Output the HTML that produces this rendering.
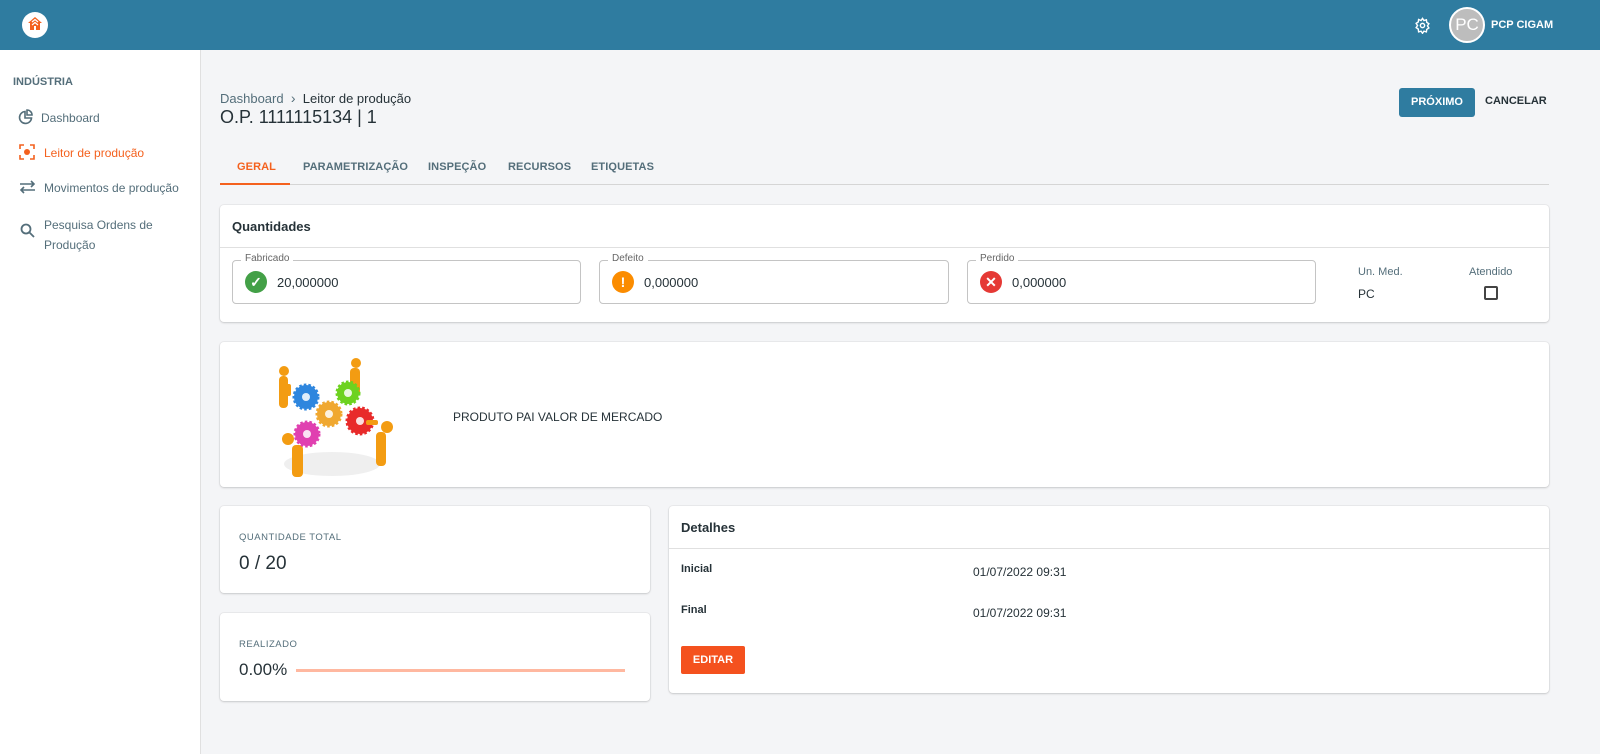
<!DOCTYPE html>
<html><head><meta charset="utf-8"><style>
*{box-sizing:border-box;margin:0;padding:0}
body{width:1600px;height:754px;background:#f4f5f7;font-family:"Liberation Sans",Roboto,sans-serif;color:#263238;position:relative;overflow:hidden}
.hdr{position:absolute;left:0;top:0;width:1600px;height:50px;background:#2f7ca0}
.side{position:absolute;left:0;top:50px;width:201px;height:704px;background:#fff;border-right:1px solid #e0e0e0}
.abs{position:absolute}
.card{position:absolute;background:#fff;border-radius:4px;box-shadow:0 1px 2px rgba(0,0,0,.15),0 0 0 1px rgba(0,0,0,.04)}
.nav{position:absolute;font-size:12px;color:#546e7a}
.fld{position:absolute;top:260px;height:44px;border:1px solid #c4c4c4;border-radius:4px}
.fld .lb{position:absolute;top:-8px;left:8px;background:#fff;padding:0 4px;font-size:10px;color:#666}
.fld .v{position:absolute;left:44px;top:14px;font-size:13px;color:#263238}
.ic{position:absolute;left:12px;top:10px;width:22px;height:22px;border-radius:50%;color:#fff;text-align:center;font-weight:bold;line-height:22px;font-size:14px}
.tab{position:absolute;top:161px;font-size:11px;font-weight:bold;color:#546e7a;letter-spacing:.1px}
</style></head><body>
<div class="hdr">
 <div class="abs" style="left:22px;top:12px;width:26px;height:26px;border-radius:50%;background:#fff"></div>
 <svg class="abs" style="left:27px;top:16px" width="16" height="16" viewBox="0 0 16 16"><path d="M8 1L1 7h2v7h4v-4h2v4h4V7h2z" fill="#f4611e"/><path d="M5 6l3-2.5L11 6M5 9l3-2.5L11 9" stroke="#fff" stroke-width="1.2" fill="none"/></svg>
 <svg class="abs" style="left:1414px;top:17px" width="17" height="17" viewBox="0 0 24 24" fill="none" stroke="#fff" stroke-width="2"><circle cx="12" cy="12" r="3"/><path d="M12 2l2 3 3.5-1 .5 3.5 3 2-2 3 2 3-3 2-.5 3.5-3.5-1-2 3-2-3-3.5 1L6 17l-3-2 2-3-2-3 3-2 .5-3.5L10 5z"/></svg>
 <div class="abs" style="left:1449px;top:7px;width:36px;height:36px;border-radius:50%;background:#bdbdbd;border:2px solid #fff;color:#fff;font-size:17px;text-align:center;line-height:32px">PC</div>
 <div class="abs" style="left:1491px;top:19px;line-height:13px;color:#fff;font-size:11px;font-weight:bold">PCP CIGAM</div>
</div>
<div class="side">
 <div class="abs" style="left:13px;top:26px;font-size:11px;color:#546e7a;font-weight:bold">INDÚSTRIA</div>
 <svg class="abs" style="left:18px;top:59px" width="16" height="16" viewBox="0 0 16 16" fill="none" stroke="#546e7a" stroke-width="1.6"><path d="M7 2.5A6 6 0 1 0 13.5 9H7z"/><path d="M9 1v5h5A5 5 0 0 0 9 1z"/></svg>
 <div class="nav" style="left:41px;top:61px">Dashboard</div>
 <svg class="abs" style="left:19px;top:94px" width="16" height="16" viewBox="0 0 16 16" fill="none" stroke="#f4611e" stroke-width="1.6"><path d="M1 5V1h4M11 1h4v4M15 11v4h-4M5 15H1v-4"/><circle cx="8" cy="8" r="3" fill="#f4611e" stroke="none"/></svg>
 <div class="nav" style="left:44px;top:96px;color:#f4611e">Leitor de produção</div>
 <svg class="abs" style="left:19px;top:130px" width="17" height="14" viewBox="0 0 17 14" fill="none" stroke="#546e7a" stroke-width="1.6"><path d="M1 4h14M12 1l3 3-3 3M16 10H2M5 7l-3 3 3 3"/></svg>
 <div class="nav" style="left:44px;top:131px">Movimentos de produção</div>
 <svg class="abs" style="left:20px;top:173px" width="15" height="15" viewBox="0 0 15 15" fill="none" stroke="#546e7a" stroke-width="1.8"><circle cx="6" cy="6" r="4.5"/><path d="M9.5 9.5L14 14"/></svg>
 <div class="nav" style="left:44px;top:165px;line-height:20px">Pesquisa Ordens de<br>Produção</div>
</div>
<div class="abs" style="left:220px;top:90px;font-size:13px;color:#546e7a">Dashboard &nbsp;<span style="font-size:14px">›</span>&nbsp; <span style="color:#263238">Leitor de produção</span></div>
<div class="abs" style="left:220px;top:107px;font-size:18px;color:#263238">O.P. 1111115134 | 1</div>
<div class="abs" style="left:1399px;top:88px;width:76px;height:29px;background:#2f7ca0;border-radius:3px;color:#fff;font-size:11px;font-weight:bold;text-align:center;line-height:29px">PRÓXIMO</div>
<div class="abs" style="left:1485px;top:95px;font-size:11px;font-weight:bold;color:#263238">CANCELAR</div>
<div class="tab" style="left:237px;color:#f4611e">GERAL</div>
<div class="tab" style="left:303px">PARAMETRIZAÇÃO</div>
<div class="tab" style="left:428px">INSPEÇÃO</div>
<div class="tab" style="left:508px">RECURSOS</div>
<div class="tab" style="left:591px">ETIQUETAS</div>
<div class="abs" style="left:220px;top:184px;width:1329px;height:1px;background:#d5d5d5"></div>
<div class="abs" style="left:220px;top:183px;width:70px;height:2px;background:#f4611e"></div>
<div class="card" style="left:220px;top:205px;width:1329px;height:117px">
 <div class="abs" style="left:12px;top:14px;font-size:13px;font-weight:bold">Quantidades</div>
 <div class="abs" style="left:0;top:42px;width:100%;height:1px;background:#e0e0e0"></div>
 <div class="abs" style="left:1138px;top:61px;font-size:11px;color:#546e7a">Un. Med.</div>
 <div class="abs" style="left:1138px;top:82px;font-size:12px">PC</div>
 <div class="abs" style="left:1249px;top:61px;font-size:11px;color:#546e7a">Atendido</div>
 <div class="abs" style="left:1264px;top:81px;width:14px;height:14px;border:2px solid #444;border-radius:2px"></div>
</div>
<div class="fld" style="left:232px;width:349px"><span class="lb">Fabricado</span><div class="ic" style="background:#43a047">✓</div><span class="v">20,000000</span></div>
<div class="fld" style="left:599px;width:350px"><span class="lb">Defeito</span><div class="ic" style="background:#fb8c00">!</div><span class="v">0,000000</span></div>
<div class="fld" style="left:967px;width:349px"><span class="lb">Perdido</span><div class="ic" style="background:#e53935">✕</div><span class="v">0,000000</span></div>
<div class="card" style="left:220px;top:342px;width:1329px;height:145px">
 <svg class="abs" style="left:50px;top:12px" width="130" height="125" viewBox="0 0 130 125">
  <ellipse cx="62" cy="110" rx="48" ry="12" fill="#efefef"/>
  <g fill="#f39c12"><circle cx="14" cy="17" r="5"/><rect x="9" y="22" width="9" height="32" rx="4"/><circle cx="86" cy="9" r="5"/><rect x="80" y="14" width="10" height="28" rx="4"/><circle cx="117" cy="73" r="6"/><rect x="106" y="78" width="10" height="34" rx="4"/><circle cx="18" cy="85" r="6"/><rect x="22" y="91" width="11" height="32" rx="4"/></g>
  <g stroke-width="3" stroke-dasharray="2.5 2">
   <circle cx="36" cy="43" r="12" fill="#2e86de" stroke="#2e86de"/><circle cx="78" cy="39" r="11" fill="#6dd21f" stroke="#6dd21f"/><circle cx="59" cy="60" r="12" fill="#f0a830" stroke="#f0a830"/><circle cx="37" cy="80" r="12" fill="#e040b0" stroke="#e040b0"/><circle cx="90" cy="67" r="13" fill="#e82a2a" stroke="#e82a2a"/>
  </g>
  <g fill="#fff" opacity=".85"><circle cx="36" cy="43" r="4"/><circle cx="78" cy="39" r="4"/><circle cx="59" cy="60" r="4"/><circle cx="37" cy="80" r="4"/><circle cx="90" cy="67" r="4"/></g>
  <g fill="#f39c12"><rect x="16" y="30" width="5" height="12" rx="2"/><rect x="96" y="66" width="12" height="5" rx="2"/></g>
 </svg>
 <div class="abs" style="left:233px;top:68px;font-size:12px">PRODUTO PAI VALOR DE MERCADO</div>
</div>
<div class="card" style="left:220px;top:506px;width:430px;height:87px">
 <div class="abs" style="left:19px;top:26px;font-size:9.5px;color:#546e7a;letter-spacing:.5px">QUANTIDADE TOTAL</div>
 <div class="abs" style="left:19px;top:47px;font-size:19px">0 / 20</div>
</div>
<div class="card" style="left:220px;top:613px;width:430px;height:88px">
 <div class="abs" style="left:19px;top:26px;font-size:9.5px;color:#546e7a;letter-spacing:.5px">REALIZADO</div>
 <div class="abs" style="left:19px;top:47px;font-size:17px">0.00%</div>
 <div class="abs" style="left:76px;top:56px;width:329px;height:3px;background:#ffb8a0"></div>
</div>
<div class="card" style="left:669px;top:506px;width:880px;height:187px">
 <div class="abs" style="left:12px;top:14px;font-size:13px;font-weight:bold">Detalhes</div>
 <div class="abs" style="left:0;top:42px;width:100%;height:1px;background:#e0e0e0"></div>
 <div class="abs" style="left:12px;top:57px;font-size:11px;font-weight:bold">Inicial</div>
 <div class="abs" style="left:304px;top:59px;font-size:12px">01/07/2022 09:31</div>
 <div class="abs" style="left:12px;top:98px;font-size:11px;font-weight:bold">Final</div>
 <div class="abs" style="left:304px;top:100px;font-size:12px">01/07/2022 09:31</div>
 <div class="abs" style="left:12px;top:140px;width:64px;height:28px;background:#f4511e;border-radius:2px;color:#fff;font-size:11px;font-weight:bold;text-align:center;line-height:28px">EDITAR</div>
</div>
</body></html>
